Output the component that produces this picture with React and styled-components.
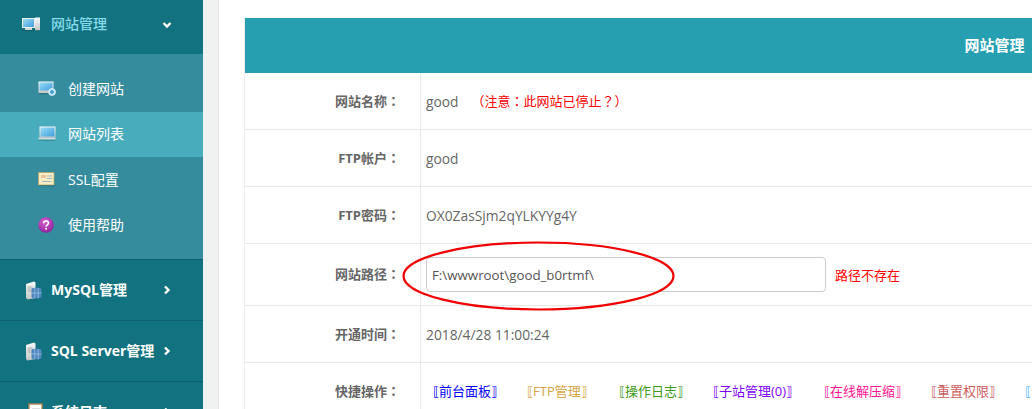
import React from "react";
import styled, { createGlobalStyle } from "styled-components";

const GlobalStyle = createGlobalStyle`
  html, body {
    margin: 0;
    padding: 0;
    background: #fff;
    overflow: hidden;
  }
  * {
    box-sizing: border-box;
  }
`;

const Page = styled.div`
  display: flex;
  width: 1032px;
  height: 409px;
  overflow: hidden;
  font-family: "Open Sans", "Noto Sans CJK SC", sans-serif;
  font-size: 13px;
  color: #666;
`;

const Sidebar = styled.aside`
  flex: 0 0 203px;
  height: 409px;
  overflow: hidden;
  background: #12727f;
`;

const GroupRow = styled.div`
  display: flex;
  align-items: center;
  height: ${(p) => (p.$first ? "54px" : "61px")};
  padding: ${(p) => (p.$first ? "0 0 6px 22px" : "0 0 0 22px")};
  border-bottom: ${(p) => (p.$first ? "none" : "1px solid #0e5f6c")};
  color: ${(p) => (p.$active ? "#86dcec" : "#fff")};
  font-size: 14px;
  font-weight: ${(p) => (p.$active ? 500 : 700)};
`;

const GroupIcon = styled.span`
  display: flex;
  flex: 0 0 29px;
`;

const GroupText = styled.span`
  flex: 0 0 111px;
  padding-bottom: 2px;
  white-space: nowrap;
`;

const Chevron = styled.svg`
  width: 10px;
  height: 10px;
  fill: none;
  stroke: #fff;
  stroke-width: 2.4;
`;

const SubPanel = styled.div`
  padding: 12px 0 11px;
  background: #348c9d;
  border-bottom: 1px solid #0e5f6c;
`;

const SubItem = styled.div`
  display: flex;
  align-items: center;
  height: 45.5px;
  padding-left: 38px;
  color: #fff;
  font-size: 14px;
  background: ${(p) => (p.$selected ? "#49acbc" : "transparent")};
`;

const SubIcon = styled.span`
  display: flex;
  flex: 0 0 30px;
`;

const SubText = styled.span`
  padding-bottom: 2px;
`;

const Gutter = styled.div`
  flex: 0 0 16px;
  background: #f0f2f2;
  border-right: 1px solid #e2e4e4;
`;

const Main = styled.main`
  position: relative;
  flex: 0 0 1500px;
  padding: 18px 0 0 25px;
`;

const Panel = styled.section`
  width: 1500px;
  border-left: 1px solid #ececec;
`;

const PanelHead = styled.header`
  display: flex;
  align-items: center;
  justify-content: center;
  height: 55px;
  padding-bottom: 2px;
  background: #26a0b0;
  color: #fff;
  font-size: 15px;
  font-weight: 700;
`;

const Row = styled.div`
  display: flex;
  height: ${(p) => p.$h}px;
  border-bottom: 1px solid #e8e8e8;
`;

const Label = styled.div`
  display: flex;
  flex: 0 0 176px;
  align-items: center;
  justify-content: flex-end;
  padding: 0 20px 2px 0;
  border-right: 1px solid #e8e8e8;
  color: #666;
  font-weight: 700;
`;

/* centred full-width punctuation, as the reference draws it */
const Mark = styled.span`
  font-family: "Noto Sans CJK TC", sans-serif;
`;

const Value = styled.div`
  display: flex;
  flex: 1;
  align-items: center;
  padding-left: 5px;
  font-size: 13.8px;
`;

const Warning = styled.span`
  margin-left: 13px;
  padding-bottom: 1px;
  color: #f00;
  font-size: 13px;
`;

const PathInput = styled.input`
  width: 400px;
  height: 35px;
  padding: 0 5px;
  border: 1px solid #ccc;
  border-radius: 4px;
  background: #fff;
  color: #555;
  font-family: inherit;
  font-size: 13.3px;
  outline: none;
`;

const PathError = styled.span`
  margin-left: 9px;
  color: #f00;
  font-size: 13px;
`;

const QuickLinks = styled.div`
  display: flex;
  gap: 30px;
  padding: 0 0 2px 7px;
  font-size: 13px;
  white-space: nowrap;
`;

const QuickLink = styled.a`
  min-width: ${(p) => p.$w || 0}px;
  color: ${(p) => p.$color};
  text-decoration: none;
`;

const Circle = styled.svg`
  position: absolute;
  left: 183px;
  top: 241px;
  width: 276px;
  height: 71px;
  fill: none;
  stroke: #f00000;
  stroke-width: 2.2;
`;

const Defs = styled.svg`
  position: absolute;
  width: 0;
  height: 0;
`;

const SharedDefs = () => (
  <Defs aria-hidden="true">
    <defs>
      <linearGradient id="screen" x1="0" y1="0" x2="1" y2="1">
        <stop offset="0" stopColor="#9bdcf5" />
        <stop offset="1" stopColor="#3f9fdc" />
      </linearGradient>
      <linearGradient id="case" x1="0" y1="0" x2="0" y2="1">
        <stop offset="0" stopColor="#fafafa" />
        <stop offset="1" stopColor="#c2c6c6" />
      </linearGradient>
      <radialGradient id="ball" cx="0.4" cy="0.3" r="0.8">
        <stop offset="0" stopColor="#d55fd0" />
        <stop offset="1" stopColor="#8a1c98" />
      </radialGradient>
    </defs>
  </Defs>
);

const DesktopIcon = () => (
  <svg width="18" height="16" viewBox="0 0 18 16">
    <rect x="0" y="2" width="13" height="10" fill="#eef0f0" />
    <rect x="1" y="3" width="11" height="8" fill="url(#screen)" />
    <rect x="3" y="12" width="7" height="2" fill="#d3d6d6" />
    <rect x="13" y="1.500" width="5" height="13" fill="url(#case)" />
    <path d="M0 14.500h18" stroke="#0c5560" strokeWidth="1" opacity="0.5" />
  </svg>
);

const AddSiteIcon = () => (
  <svg width="18" height="15" viewBox="0 0 18 15">
    <rect x="0.500" y="0.500" width="15" height="11.500" fill="url(#case)" />
    <rect x="1.500" y="1.500" width="13" height="8" fill="url(#screen)" />
    <path d="M0.500 12.800h12" stroke="#1f5f6c" strokeWidth="1" opacity="0.6" />
    <circle cx="14" cy="11" r="3.500" fill="#b5e2f7" stroke="#fff" strokeWidth="0.6" />
    <path d="M14 9v4M12 11h4" stroke="#1f86c8" strokeWidth="1.200" />
  </svg>
);

const ListIcon = () => (
  <svg width="18" height="16" viewBox="0 0 18 16">
    <rect x="1.500" y="0.500" width="16" height="11" fill="url(#case)" />
    <rect x="2.500" y="1.500" width="14" height="9" fill="url(#screen)" />
    <path d="M0.500 11.500h17v2H0.500z" fill="#d6d9d9" />
    <path d="M0.500 14.300h17" stroke="#2a7c8a" strokeWidth="1" opacity="0.7" />
  </svg>
);

const SslIcon = () => (
  <svg width="18" height="15" viewBox="0 0 18 15">
    <rect x="0.500" y="0.500" width="15.500" height="12.500" fill="#f8ecc2" stroke="#b5a368" strokeWidth="0.8" />
    <rect x="3" y="3" width="5" height="3" fill="#e8c39a" />
    <path d="M9 4h5M9 6.500h5M4 9.500h9" stroke="#a3b7cc" strokeWidth="1" />
    <path d="M1 13.800h16" stroke="#1f5f6c" strokeWidth="1" opacity="0.6" />
  </svg>
);

const HelpIcon = () => (
  <svg width="16" height="16" viewBox="0 0 16 16">
    <circle cx="8" cy="8" r="7.800" fill="url(#ball)" />
    <path
      d="M5.600 6.200c0-3 4.900-3 4.900-.2 0 1.800-2.400 1.900-2.400 3.700"
      fill="none"
      stroke="#fff"
      strokeWidth="1.600"
    />
    <circle cx="8.100" cy="11.800" r="1" fill="#fff" />
  </svg>
);

const DbIcon = () => (
  <svg width="21" height="19" viewBox="-3 0 21 19">
    <path d="M1 3l8-2.500 1.500 1V17l-8 1.500L1 17z" fill="url(#case)" />
    <path d="M2.500 6h5M2.500 8h5M2.500 10h5" stroke="#9ca0a0" strokeWidth="0.8" />
    <path d="M6.500 8c0-1.800 10-1.800 10 0v8c0 1.800-10 1.800-10 0z" fill="#4f86bd" />
    <path d="M9.800 7v10.500M13.200 7v10.500M6.500 12h10" stroke="#a9cbe8" strokeWidth="0.7" />
  </svg>
);

const LogIcon = () => (
  <svg width="22" height="18" viewBox="-6 0 22 18">
    <rect x="1" y="1" width="13" height="16" fill="#fff" stroke="#b08550" strokeWidth="1.400" />
    <path d="M4 6h8M4 9h8M4 12h8" stroke="#c2c2c2" strokeWidth="1" />
  </svg>
);

const ChevronDown = () => (
  <Chevron viewBox="0 0 10 10">
    <path d="M1.500 4l3.500 3.500L8.500 4" />
  </Chevron>
);

const ChevronRight = () => (
  <Chevron viewBox="0 0 10 10">
    <path d="M3 1.500L6.500 5 3 8.500" />
  </Chevron>
);

const subItems = [
  { text: "创建网站", icon: <AddSiteIcon /> },
  { text: "网站列表", icon: <ListIcon />, selected: true },
  { text: "SSL配置", icon: <SslIcon /> },
  { text: "使用帮助", icon: <HelpIcon /> },
];

const groups = [
  { text: "MySQL管理", icon: <DbIcon /> },
  { text: "SQL Server管理", icon: <DbIcon /> },
  { text: "系统日志", icon: <LogIcon /> },
];

const links = [
  { text: "前台面板", color: "#0000ff" },
  { text: "FTP管理", color: "#d4a545", w: 62 },
  { text: "操作日志", color: "#3d9a22" },
  { text: "子站管理(0)", color: "#8000ff", w: 81 },
  { text: "在线解压缩", color: "#ff1493", w: 77 },
  { text: "重置权限", color: "#cd5c5c" },
  { text: "流量统计", color: "#4db8ff" },
];

const App = () => {
  return (
    <Page>
      <GlobalStyle />
      <SharedDefs />
      <Sidebar>
        <GroupRow $first $active>
          <GroupIcon>
            <DesktopIcon />
          </GroupIcon>
          <GroupText>网站管理</GroupText>
          <ChevronDown />
        </GroupRow>
        <SubPanel>
          {subItems.map((item) => (
            <SubItem key={item.text} $selected={item.selected}>
              <SubIcon>{item.icon}</SubIcon>
              <SubText>{item.text}</SubText>
            </SubItem>
          ))}
        </SubPanel>
        {groups.map((group) => (
          <GroupRow key={group.text}>
            <GroupIcon>{group.icon}</GroupIcon>
            <GroupText>{group.text}</GroupText>
            <ChevronRight />
          </GroupRow>
        ))}
      </Sidebar>
      <Gutter />
      <Main>
        <Panel>
          <PanelHead>网站管理</PanelHead>
          <Row $h={57}>
            <Label>网站名称<Mark>：</Mark></Label>
            <Value>
              good
              <Warning>
                （注意<Mark>：</Mark>此网站已停止<Mark>？</Mark>）
              </Warning>
            </Value>
          </Row>
          <Row $h={57}>
            <Label>FTP帐户<Mark>：</Mark></Label>
            <Value>good</Value>
          </Row>
          <Row $h={57}>
            <Label>FTP密码<Mark>：</Mark></Label>
            <Value>OX0ZasSjm2qYLKYYg4Y</Value>
          </Row>
          <Row $h={62}>
            <Label>网站路径<Mark>：</Mark></Label>
            <Value>
              <PathInput readOnly value="F:\wwwroot\good_b0rtmf\" />
              <PathError>路径不存在</PathError>
            </Value>
          </Row>
          <Row $h={57}>
            <Label>开通时间<Mark>：</Mark></Label>
            <Value>2018/4/28 11:00:24</Value>
          </Row>
          <Row $h={57}>
            <Label>快捷操作<Mark>：</Mark></Label>
            <Value>
              <QuickLinks>
                {links.map((link) => (
                  <QuickLink key={link.text} href="#" $color={link.color} $w={link.w}>
                    ⟦{link.text}⟧
                  </QuickLink>
                ))}
              </QuickLinks>
            </Value>
          </Row>
        </Panel>
        <Circle viewBox="0 0 276 71">
          <ellipse cx="136.500" cy="35" rx="135" ry="33.500" />
        </Circle>
      </Main>
    </Page>
  );
};

export default App;
